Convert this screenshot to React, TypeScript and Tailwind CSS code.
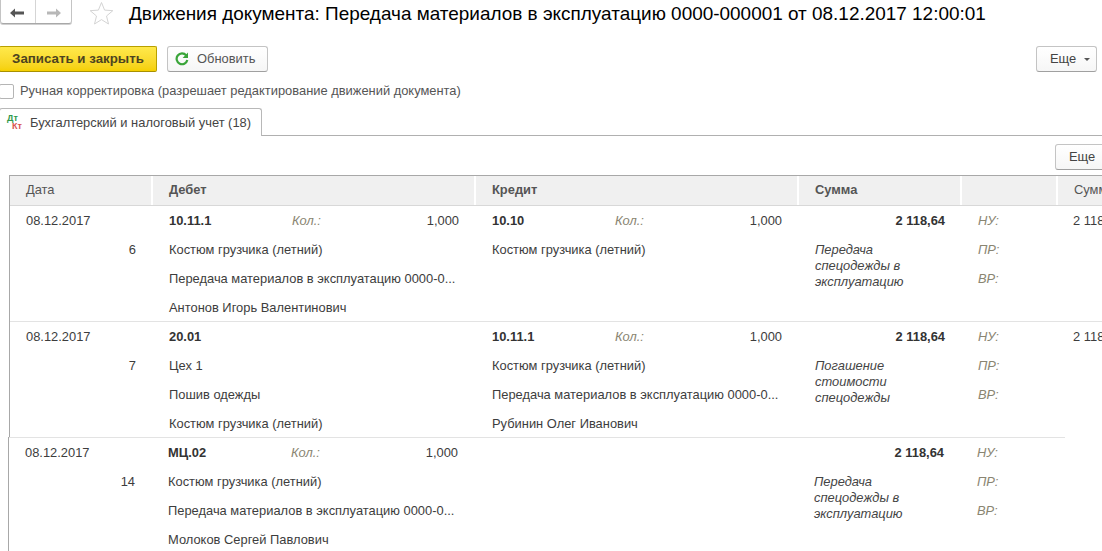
import React from "react";

const LABEL = "italic text-[#8a8572]";

function Line({ children, cls = "" }: { children?: React.ReactNode; cls?: string }) {
  return <div className={`h-[29px] leading-[29px] whitespace-nowrap ${cls}`}>{children}</div>;
}

function Account({ code, qty, lines }: { code?: string; qty?: boolean; lines: string[] }) {
  return (
    <div className="w-[323px] shrink-0 pl-[16px] pr-[17px]">
      <div className="h-[29px] leading-[29px] flex">
        <span className="w-[123px] font-bold text-[#333]">{code}</span>
        {qty && <span className={`${LABEL} w-[60px]`}>Кол.:</span>}
        {qty && <span className="flex-1 text-right">1,000</span>}
      </div>
      {lines.map((l) => (
        <Line key={l}>{l}</Line>
      ))}
    </div>
  );
}

function Row({
  num,
  debit,
  credit,
  note,
  tail,
  cls,
}: {
  num: string;
  debit: React.ReactNode;
  credit: React.ReactNode;
  note: string[];
  tail: boolean;
  cls: string;
}) {
  return (
    <div className={`flex ${cls}`}>
      <div className="w-[143px] shrink-0 pl-[16px] pr-[17px]">
        <Line>08.12.2017</Line>
        <Line cls="text-right">{num}</Line>
      </div>
      {debit}
      {credit}
      <div className="w-[163px] shrink-0 pl-[16px] pr-[17px]">
        <Line cls="text-right font-bold text-[#333]">2 118,64</Line>
        <div className="italic text-[#444] leading-[16px] pt-[7px]">
          {note.map((n) => (
            <div key={n}>{n}</div>
          ))}
        </div>
      </div>
      <div className="w-[96px] shrink-0 pl-[16px]">
        <Line cls={LABEL}>НУ:</Line>
        <Line cls={LABEL}>ПР:</Line>
        <Line cls={LABEL}>ВР:</Line>
      </div>
      {tail && <div className="pl-[15px]"><Line>2 118,64</Line></div>}
    </div>
  );
}

function HeadCell({ w, children, bold }: { w: string; children?: React.ReactNode; bold?: boolean }) {
  return (
    <div className={`${w} shrink-0 h-[29px] leading-[27px] bg-[#f0f0f0] border-r-2 border-white pl-[16px] text-[#555] whitespace-nowrap ${bold ? "font-bold" : ""}`}>
      {children}
    </div>
  );
}

export default function App() {
  return (
    <div
      className="w-[1102px] h-[551px] overflow-hidden bg-white text-[12.9px] text-[#3d3d3d] relative"
      style={{ fontFamily: '"Liberation Sans", Arial, sans-serif' }}
    >
      {/* title bar */}
      <div className="flex items-center h-[24px]">
        <div className="flex h-[24px] w-[72px] rounded-b-[3px] border border-t-0 border-[#c4c4c4] border-b-[#a8a8a8] shadow-[0_1px_0_#d0d0d0]">
          <div className="w-[35px] flex items-center justify-center border-r border-[#d5d5d5] pt-[2px] pr-[2px]">
            <svg width="16" height="12" viewBox="0 0 16 12"><path d="M1 6 L6 1.5 V4.5 H15 V7.5 H6 V10.5 Z" fill="#555" /></svg>
          </div>
          <div className="flex-1 flex items-center justify-center pt-[2px]">
            <svg width="16" height="12" viewBox="0 0 16 12"><path d="M15 6 L10 1.5 V4.5 H1 V7.5 H10 V10.5 Z" fill="#b8b8b8" /></svg>
          </div>
        </div>
        <svg className="ml-[17px] mt-[2px]" width="25" height="24" viewBox="0 0 25 24">
          <path d="M12.5 1.5 L15.6 9.1 L23.8 9.7 L17.5 15 L19.5 23 L12.5 18.6 L5.5 23 L7.5 15 L1.2 9.7 L9.4 9.1 Z" fill="none" stroke="#d4d4d4" strokeWidth="1" />
        </svg>
        <h1 className="ml-[15px] mt-[3px] text-[18.95px] leading-[24px] text-black whitespace-nowrap font-normal">
          Движения документа: Передача материалов в эксплуатацию 0000-000001 от 08.12.2017 12:00:01
        </h1>
      </div>

      {/* command bar */}
      <div className="flex items-start mt-[22px] h-[26px]">
        <button className="w-[158px] h-[26px] -ml-[1px] rounded-[2px] border border-[#b8a000] border-b-[#a89000] bg-gradient-to-b from-[#ffe94a] to-[#f5d000] font-bold text-[#4d4420] text-[13.3px] leading-[24px]">
          Записать и закрыть
        </button>
        <button className="ml-[10px] w-[101px] h-[26px] rounded-[3px] border border-[#c4c4c4] border-b-[#a0a0a0] flex items-center bg-gradient-to-b from-white to-[#f6f6f6] text-[#555]">
          <svg className="ml-[7px]" width="14" height="14" viewBox="0 0 14 14">
            <path d="M11.2 3.4 A5.4 5.4 0 1 0 12.3 8" fill="none" stroke="#3aa53a" strokeWidth="2.2" />
            <path d="M13 0.6 V6 H7.6 Z" fill="#3aa53a" />
          </svg>
          <span className="ml-[8px]">Обновить</span>
        </button>
        <button className="ml-auto mr-[5px] w-[61px] h-[26px] rounded-[3px] border border-[#c4c4c4] border-b-[#a0a0a0] flex items-center pl-[13px] gap-[8px] bg-gradient-to-b from-white to-[#f6f6f6] text-[#444]">
          Еще
          <span className="w-0 h-0 border-x-[3px] border-x-transparent border-t-[3px] border-t-[#555]" />
        </button>
      </div>

      {/* manual correction */}
      <div className="flex items-center mt-[11px] h-[16px] -ml-[1px]">
        <span className="w-[15px] h-[15px] rounded-[2px] border border-[#b5b5b5] bg-white" />
        <span className="ml-[6px] text-[#555]">Ручная корректировка (разрешает редактирование движений документа)</span>
      </div>

      {/* tabs */}
      <div className="flex mt-[9px] h-[28px] border-b border-[#b0b0b0]">
        <div className="w-[263px] h-[28px] rounded-t-[3px] border border-b-0 border-[#b8b8b8] bg-white flex items-center relative -ml-[1px] z-10">
          <div className="w-[17px] ml-[7px] -mt-[1px] text-[9px] leading-[8px] font-bold shrink-0">
            <div className="text-[#2f9a4b]">Дт</div>
            <div className="text-[#d9534f] pl-[5px]">Кт</div>
          </div>
          <span className="ml-[6px] text-[#444]">Бухгалтерский и налоговый учет (18)</span>
        </div>
      </div>

      {/* tab toolbar */}
      <div className="flex justify-end h-[26px] mt-[8px] -mr-[14px]">
        <button className="w-[61px] h-[26px] rounded-[3px] border border-[#c4c4c4] border-b-[#a0a0a0] bg-gradient-to-b from-white to-[#f6f6f6] text-[#444] text-left pl-[13px]">
          Еще
        </button>
      </div>

      {/* table */}
      <div className="ml-[9px] mt-[5px] w-[1093px]">
        <div className="border-l border-t border-[#a8a8a8]">
          <div className="flex border-b border-[#d8d8d8]">
            <HeadCell w="w-[143px]">Дата</HeadCell>
            <HeadCell w="w-[323px]" bold>Дебет</HeadCell>
            <HeadCell w="w-[323px]" bold>Кредит</HeadCell>
            <HeadCell w="w-[163px]" bold>Сумма</HeadCell>
            <HeadCell w="w-[96px]" />
            <HeadCell w="w-[60px]">Сумма</HeadCell>
          </div>
          <Row
            num="6"
            tail
            cls="h-[116px] border-b border-[#e3e3e3]"
            debit={<Account code="10.11.1" qty lines={["Костюм грузчика (летний)", "Передача материалов в эксплуатацию 0000-0...", "Антонов Игорь Валентинович"]} />}
            credit={<Account code="10.10" qty lines={["Костюм грузчика (летний)"]} />}
            note={["Передача", "спецодежды в", "эксплуатацию"]}
          />
          <Row
            num="7"
            tail
            cls="h-[115px]"
            debit={<Account code="20.01" lines={["Цех 1", "Пошив одежды", "Костюм грузчика (летний)"]} />}
            credit={<Account code="10.11.1" qty lines={["Костюм грузчика (летний)", "Передача материалов в эксплуатацию 0000-0...", "Рубинин Олег Иванович"]} />}
            note={["Погашение", "стоимости", "спецодежды"]}
          />
        </div>
        <div className="-ml-px border-l border-[#a8a8a8] w-[1057px] overflow-hidden">
          <Row
            num="14"
            tail={false}
            cls="border-t border-[#e3e3e3]"
            debit={<Account code="МЦ.02" qty lines={["Костюм грузчика (летний)", "Передача материалов в эксплуатацию 0000-0...", "Молоков Сергей Павлович"]} />}
            credit={<Account lines={[]} />}
            note={["Передача", "спецодежды в", "эксплуатацию"]}
          />
        </div>
      </div>
    </div>
  );
}
